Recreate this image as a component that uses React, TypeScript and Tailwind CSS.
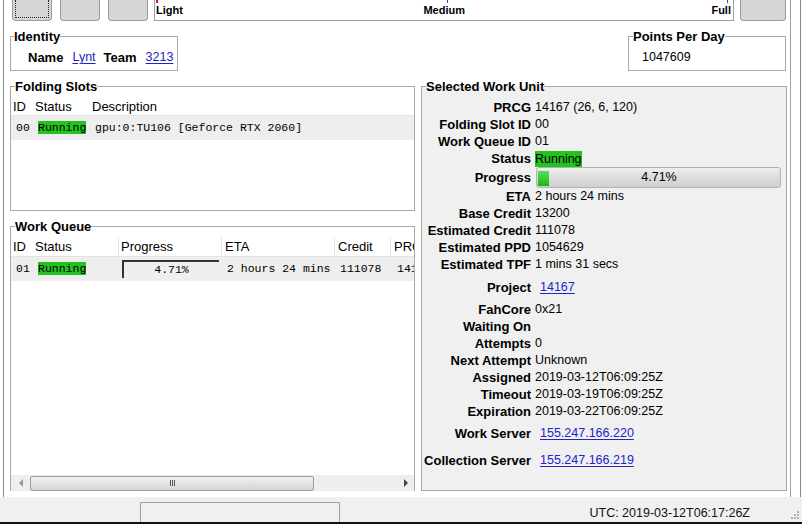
import React from "react";

const sans = "font-['Liberation_Sans',Arial,sans-serif]";
const mono = "font-['Liberation_Mono','Courier_New',monospace]";

type RowProps = {
  label: string;
  h?: string;
  children?: React.ReactNode;
};

const Row = ({ label, h = "h-[17px]", children }: RowProps) => {
  return (
    <div className={`flex items-center ${h}`}>
      <div className="w-[109px] shrink-0 text-right text-[13px] font-bold leading-none text-black">
        {label}
      </div>
      <div className="ml-[4px] flex items-center text-[12.5px] leading-none text-black">
        {children}
      </div>
    </div>
  );
};

const Link = ({ children }: { children: React.ReactNode }) => (
  <span className="text-[#2323c8] underline underline-offset-2">{children}</span>
);

const Running = ({ m }: { m?: boolean }) => (
  <span
    className={`bg-[#22c21f] leading-[16px] ${m ? mono + " text-[11.5px]" : "text-[12.5px]"}`}
  >
    Running
  </span>
);

const TopButton = ({ w, focus }: { w: string; focus?: boolean }) => (
  <div
    className={`${w} h-[21px] shrink-0 rounded-b-[4px] border border-t-0 border-[#9a9a9a] bg-[#d6d6d6] p-[2px] pt-0`}
  >
    {focus && <div className="h-full w-full border border-t-0 border-dotted border-[#222]"></div>}
  </div>
);

const App = () => {
  return (
    <div className={`flex h-[524px] w-[802px] flex-col overflow-hidden bg-white ${sans}`}>
      <div className="flex h-[497px] shrink-0">
        <div className="w-[3px] shrink-0"></div>
        <div className="w-px shrink-0 bg-[#8a8a8a]"></div>

        {/* window content */}
        <div className="flex w-[786px] shrink-0 flex-col">
          {/* top toolbar */}
          <div className="flex h-[21px] shrink-0 pl-[8px] pr-[4px]">
            <TopButton w="w-[40px]" focus />
            <div className="w-[8px]"></div>
            <TopButton w="w-[40px]" />
            <div className="w-[8px]"></div>
            <TopButton w="w-[40px]" />
            <div className="relative ml-[6px] flex h-[21px] w-[580px] shrink-0 items-center justify-between border-x border-b border-[#a0a0a0] bg-white pl-[1px] pr-[2px] pt-px text-[11px] font-bold text-black">
              <span className="absolute left-[1px] top-0 h-[3px] w-[2px] bg-[#e02020]"></span>
              <span className="absolute left-[292px] top-0 h-[3px] w-px bg-[#3050d0]"></span>
              <span className="absolute right-[5px] top-0 h-[3px] w-px bg-[#3050d0]"></span>
              <span>Light</span>
              <span className="pr-[6px]">Medium</span>
              <span>Full</span>
            </div>
            <div className="w-[6px]"></div>
            <TopButton w="w-[46px]" />
          </div>

          {/* identity row */}
          <div className="mt-[8px] flex justify-between pl-[6px] pr-[4px]">
            <fieldset className="w-[168px] min-w-0 border border-[#a8a8a8] p-0">
              <legend className="ml-[3px] p-0 text-[13px] font-bold leading-[15px]">Identity</legend>
              <div className="flex h-[26px] items-center pl-[17px] text-[13px] leading-none">
                <span className="font-bold">Name</span>
                <span className="ml-[9px] text-[12.5px]">
                  <Link>Lynt</Link>
                </span>
                <span className="ml-[8px] font-bold">Team</span>
                <span className="ml-[9px] text-[12.5px]">
                  <Link>3213</Link>
                </span>
              </div>
            </fieldset>
            <fieldset className="w-[158px] min-w-0 border border-[#a8a8a8] p-0">
              <legend className="ml-[4px] p-0 text-[13px] font-bold leading-[15px]">Points Per Day</legend>
              <div className="flex h-[26px] items-center pl-[13px] text-[12.5px] leading-none">1047609</div>
            </fieldset>
          </div>

          {/* main area */}
          <div className="mt-[8px] flex pl-[6px] pr-[4px]">
            {/* left column */}
            <div className="flex w-[405px] shrink-0 flex-col">
              <fieldset className="h-[132px] min-w-0 border border-[#a8a8a8] p-0">
                <legend className="ml-[4px] p-0 text-[13px] font-bold leading-[15px]">Folding Slots</legend>
                <div className="flex h-[22px] items-center border-b border-[#e4e4e4] pt-[3px] text-[13px] leading-none">
                  <div className="w-[22px] pl-[2px]">ID</div>
                  <div className="w-[57px] pl-[2px]">Status</div>
                  <div className="pl-[2px]">Description</div>
                </div>
                <div className={`flex h-[24px] items-center bg-[#eeeeee] text-[11.5px] ${mono}`}>
                  <div className="w-[22px] pl-[5px]">00</div>
                  <div className="w-[57px] pl-[5px]">
                    <Running m />
                  </div>
                  <div className="pl-[5px]">gpu:0:TU106 [Geforce RTX 2060]</div>
                </div>
              </fieldset>

              <fieldset className="mt-[8px] h-[272px] min-w-0 border border-[#a8a8a8] p-0">
                <legend className="ml-[4px] p-0 text-[13px] font-bold leading-[15px]">Work Queue</legend>
                <div className="flex h-[257px] w-full flex-col overflow-hidden">
                  <div className="flex h-[23px] shrink-0 items-center overflow-hidden border-b border-[#e4e4e4] pt-[3px] text-[13px] leading-none">
                    <div className="w-[22px] shrink-0 pl-[2px]">ID</div>
                    <div className="w-[85px] shrink-0 pl-[2px]">Status</div>
                    <div className="flex h-full w-[103px] shrink-0 items-center border-l border-[#e4e4e4] pl-[2px]">Progress</div>
                    <div className="flex h-full w-[113px] shrink-0 items-center border-l border-[#e4e4e4] pl-[3px]">ETA</div>
                    <div className="flex h-full w-[56px] shrink-0 items-center border-l border-[#e4e4e4] pl-[3px]">Credit</div>
                    <div className="flex h-full w-[40px] shrink-0 items-center border-l border-[#e4e4e4] pl-[3px]">PRCG</div>
                  </div>
                  <div className={`flex h-[24px] shrink-0 items-center overflow-hidden bg-[#eeeeee] text-[11.5px] ${mono}`}>
                    <div className="w-[22px] shrink-0 pl-[5px]">01</div>
                    <div className="w-[85px] shrink-0 pl-[5px]">
                      <Running m />
                    </div>
                    <div className="w-[103px] shrink-0 pl-[4px]">
                      <div className="flex h-[18px] w-[97px] items-center justify-center border-l-2 border-t-2 border-[#333] bg-[#efefef]">
                        4.71%
                      </div>
                    </div>
                    <div className="w-[113px] shrink-0 pl-[6px]">2 hours 24 mins</div>
                    <div className="w-[56px] shrink-0 pl-[6px]">111078</div>
                    <div className="w-[40px] shrink-0 pl-[7px]">14167</div>
                  </div>
                  <div className="flex-1"></div>
                  {/* horizontal scrollbar */}
                  <div className="flex h-[16px] w-full shrink-0 items-center bg-[#eeeeee]">
                    <div className="flex w-[19px] shrink-0 justify-center">
                      <span className="h-0 w-0 border-y-[4px] border-r-[4px] border-y-transparent border-r-[#9a9a9a]"></span>
                    </div>
                    <div className="flex h-[15px] w-[284px] shrink-0 items-center justify-center rounded-[2px] border border-[#9c9c9c] bg-linear-to-b from-[#f2f2f2] to-[#d4d4d4]">
                      <div className="flex gap-[1px]">
                        <span className="h-[6px] w-px bg-[#555]"></span>
                        <span className="h-[6px] w-px bg-[#555]"></span>
                        <span className="h-[6px] w-px bg-[#555]"></span>
                      </div>
                    </div>
                    <div className="min-w-0 flex-1"></div>
                    <div className="flex w-[16px] shrink-0 justify-center">
                      <span className="h-0 w-0 border-y-[4px] border-l-[4px] border-y-transparent border-l-[#444]"></span>
                    </div>
                  </div>
                </div>
              </fieldset>
            </div>

            {/* right column */}
            <fieldset className="ml-[6px] h-[412px] w-[366px] min-w-0 shrink-0 border border-[#a8a8a8] bg-[#f0f0f0] p-0">
              <legend className="ml-[4px] p-0 text-[13px] font-bold leading-[15px]">Selected Work Unit</legend>
              <div className="flex flex-col pt-[5px]">
                <Row label="PRCG">14167 (26, 6, 120)</Row>
                <Row label="Folding Slot ID">00</Row>
                <Row label="Work Queue ID">01</Row>
                <Row label="Status">
                  <Running />
                </Row>
                <Row label="Progress" h="h-[21px]">
                  <div className="relative ml-px flex h-[21px] w-[245px] items-center justify-center rounded-[3px] border border-[#b2b2b2] bg-linear-to-b from-[#efefef] via-[#dcdcdc] to-[#d0d0d0]">
                    <span className="absolute left-[1px] top-[3px] h-[15px] w-[11px] bg-linear-to-b from-[#52e052] to-[#10b810]"></span>
                    <span className="relative pl-[1px]">4.71%</span>
                  </div>
                </Row>
                <Row label="ETA">2 hours 24 mins</Row>
                <Row label="Base Credit">13200</Row>
                <Row label="Estimated Credit">111078</Row>
                <Row label="Estimated PPD">1054629</Row>
                <Row label="Estimated TPF">1 mins 31 secs</Row>
                <Row label="Project" h="h-[28px]">
                  <span className="pl-[5px]">
                    <Link>14167</Link>
                  </span>
                </Row>
                <Row label="FahCore">0x21</Row>
                <Row label="Waiting On"></Row>
                <Row label="Attempts">0</Row>
                <Row label="Next Attempt">Unknown</Row>
                <Row label="Assigned">2019-03-12T06:09:25Z</Row>
                <Row label="Timeout">2019-03-19T06:09:25Z</Row>
                <Row label="Expiration">2019-03-22T06:09:25Z</Row>
                <Row label="Work Server" h="h-[26px]">
                  <span className="pl-[5px]">
                    <Link>155.247.166.220</Link>
                  </span>
                </Row>
                <Row label="Collection Server" h="h-[28px]">
                  <span className="pl-[5px]">
                    <Link>155.247.166.219</Link>
                  </span>
                </Row>
              </div>
            </fieldset>
          </div>
        </div>

        <div className="w-px shrink-0 bg-[#a0a0a0]"></div>
        <div className="w-[9px] shrink-0"></div>
        <div className="w-px shrink-0 bg-[#8a8a8a]"></div>
      </div>

      {/* status bar */}
      <div className="flex h-[25px] shrink-0 items-end bg-[#f0f0f0] pl-[140px]">
        <div className="h-[20px] w-[200px] shrink-0 border-x border-t border-[#a0a0a0]"></div>
        <div className="flex h-full flex-1 items-center justify-end pr-[41px] pt-[7px] text-[12.5px] leading-none text-[#111]">
          UTC: 2019-03-12T06:17:26Z
        </div>
        <div className="mb-[3px] mr-[3px] grid grid-cols-3 gap-[1px] self-end">
          <span></span>
          <span></span>
          <span className="h-[2px] w-[2px] bg-[#b0b0b0]"></span>
          <span></span>
          <span className="h-[2px] w-[2px] bg-[#b0b0b0]"></span>
          <span className="h-[2px] w-[2px] bg-[#b0b0b0]"></span>
          <span className="h-[2px] w-[2px] bg-[#b0b0b0]"></span>
          <span className="h-[2px] w-[2px] bg-[#b0b0b0]"></span>
          <span className="h-[2px] w-[2px] bg-[#b0b0b0]"></span>
        </div>
      </div>
      <div className="h-[2px] shrink-0 bg-[#111]"></div>
    </div>
  );
};

export default App;
